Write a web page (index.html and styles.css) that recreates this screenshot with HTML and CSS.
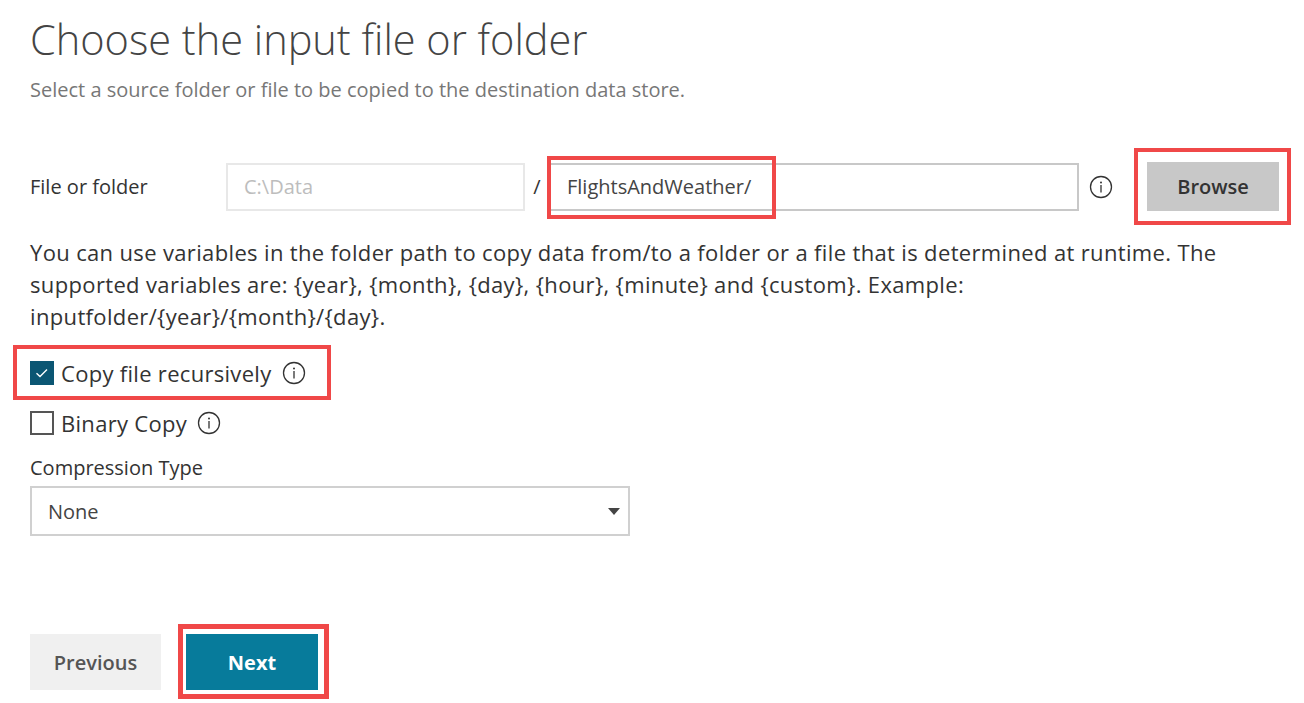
FILE: index.html
```html
<!DOCTYPE html>
<html lang="en">
<head>
<meta charset="utf-8">
<title>Choose the input file or folder</title>
<link rel="stylesheet" href="styles.css">
</head>
<body>
<main class="page">
  <h1 class="title">Choose the input file or folder</h1>
  <p class="subtitle">Select a source folder or file to be copied to the destination data store.</p>

  <div class="path-row">
    <label class="row-label">File or folder</label>
    <div class="field field-root">C:\Data</div>
    <span class="slash">/</span>
    <div class="field field-path">
      <span class="field-text">FlightsAndWeather/</span>
      <span class="mark mark-path"></span>
    </div>
    <span class="info info-lg">
      <svg viewBox="0 0 24 24" width="24" height="24"><circle cx="12" cy="12" r="10.5" fill="none" stroke="#333" stroke-width="1.3"/><circle cx="12" cy="7.6" r="1" fill="#333"/><rect x="11.35" y="10" width="1.3" height="7.5" fill="#333"/></svg>
    </span>
    <div class="btn-wrap browse-wrap">
      <button class="btn btn-browse">Browse</button>
      <span class="mark mark-browse"></span>
    </div>
  </div>

  <p class="help">You can use variables in the folder path to copy data from/to a folder or a file that is determined at runtime. The supported variables are: {year}, {month}, {day}, {hour}, {minute} and {custom}. Example: inputfolder/{year}/{month}/{day}.</p>

  <div class="check-row check-rec">
    <span class="box box-on">
      <svg viewBox="0 0 24 24" width="24" height="24"><path d="M6.5 12.3 L10 15.6 L17 8.6" fill="none" stroke="#fff" stroke-width="1.4"/></svg>
    </span>
    <span class="check-label">Copy file recursively</span>
    <span class="info">
      <svg viewBox="0 0 24 24" width="24" height="24"><circle cx="12" cy="12" r="10.5" fill="none" stroke="#333" stroke-width="1.3"/><circle cx="12" cy="7.6" r="1" fill="#333"/><rect x="11.35" y="10" width="1.3" height="7.5" fill="#333"/></svg>
    </span>
    <span class="mark mark-check"></span>
  </div>

  <div class="check-row check-bin">
    <span class="box"></span>
    <span class="check-label">Binary Copy</span>
    <span class="info">
      <svg viewBox="0 0 24 24" width="24" height="24"><circle cx="12" cy="12" r="10.5" fill="none" stroke="#333" stroke-width="1.3"/><circle cx="12" cy="7.6" r="1" fill="#333"/><rect x="11.35" y="10" width="1.3" height="7.5" fill="#333"/></svg>
    </span>
  </div>

  <div class="select-block">
    <label class="select-label">Compression Type</label>
    <div class="select">
      <span class="select-value">None</span>
      <svg class="caret" viewBox="0 0 12 7" width="12" height="7"><path d="M0 0 H12 L6 7 Z" fill="#444"/></svg>
    </div>
  </div>

  <div class="actions">
    <button class="btn btn-prev">Previous</button>
    <div class="btn-wrap next-wrap">
      <button class="btn btn-next">Next</button>
      <span class="mark mark-next"></span>
    </div>
  </div>
</main>
</body>
</html>
```

FILE: styles.css
```css
* { box-sizing: border-box; }

html, body {
  margin: 0;
  padding: 0;
  background: #fff;
}

body {
  font-family: "Open Sans", "Noto Sans", "Liberation Sans", sans-serif;
  color: #333;
}

.page {
  padding: 0 20px 13px 30px;
}

.title {
  margin: 12px 0 0;
  font-size: 41.5px;
  line-height: 54px;
  font-weight: 300;
  color: #444;
}

.subtitle {
  margin: 11px 0 0;
  font-size: 20px;
  line-height: 26px;
  color: #777;
}

.path-row {
  display: flex;
  align-items: center;
  margin-top: 59px;
  height: 49px;
}

.row-label {
  width: 196px;
  font-size: 20px;
  color: #333;
}

.field {
  height: 48px;
  display: flex;
  align-items: center;
  font-size: 20px;
  padding: 0 16px;
}

.field-root {
  width: 299px;
  border: 2px solid #e8e8e8;
  color: #bdbdbd;
}

.slash {
  width: 24px;
  text-align: center;
  font-size: 20px;
  color: #333;
}

.field-path {
  position: relative;
  width: 530px;
  border: 2px solid #c8c8c8;
  color: #444;
}

.mark {
  position: absolute;
  border: 4px solid #f04848;
  pointer-events: none;
}

.mark-path {
  left: -4px;
  top: -9px;
  width: 229px;
  height: 63px;
}

.info {
  display: inline-flex;
  width: 24px;
  height: 24px;
}

.info-lg {
  margin-left: 10px;
}

.btn-wrap {
  position: relative;
  display: flex;
}

.browse-wrap {
  margin-left: 34px;
}

.btn {
  display: block;
  border: 0;
  padding: 0;
  font-family: inherit;
  font-size: 20px;
  font-weight: 600;
  cursor: pointer;
}

.btn-browse {
  width: 132px;
  height: 49px;
  background: #c8c8c8;
  color: #333;
}

.mark-browse {
  left: -13px;
  top: -14px;
  right: -12px;
  bottom: -14px;
}

.help {
  margin: 25px 0 0;
  font-size: 22px;
  line-height: 32px;
  color: #333;
  max-width: 1230px;
  letter-spacing: 0.35px;
}

.check-row {
  position: relative;
  display: flex;
  align-items: center;
  height: 32px;
  width: max-content;
}

.check-rec {
  margin-top: 25px;
}

.check-bin {
  margin-top: 18px;
}

.box {
  width: 24px;
  height: 24px;
  border: 2px solid #555;
  margin-right: 7px;
  display: inline-flex;
  align-items: center;
  justify-content: center;
}

.box-on {
  background: #0b5673;
  border-color: #0b5673;
}

.box-on svg {
  flex: none;
}

.check-label {
  font-size: 22px;
  color: #333;
  letter-spacing: 0.3px;
  margin-right: 10px;
}

.mark-check {
  left: -17px;
  top: -12px;
  right: -25px;
  bottom: -11px;
}

.select-block {
  margin-top: 17px;
}

.select-label {
  display: block;
  font-size: 20px;
  line-height: 24px;
  color: #333;
}

.select {
  margin-top: 6px;
  width: 600px;
  height: 50px;
  border: 2px solid #d0d0d0;
  display: flex;
  align-items: center;
  justify-content: space-between;
  padding: 0 8px 0 16px;
}

.select-value {
  font-size: 20px;
  color: #444;
}

.actions {
  display: flex;
  align-items: flex-start;
  gap: 25px;
  margin-top: 98px;
}

.btn-prev {
  width: 131px;
  height: 56px;
  background: #f0f0f0;
  color: #555;
}

.btn-next {
  width: 132px;
  height: 56px;
  background: #077b9b;
  color: #fff;
  font-weight: 700;
}

.mark-next {
  border-width: 5px;
  left: -8px;
  top: -10px;
  right: -11px;
  bottom: -9px;
}
```
